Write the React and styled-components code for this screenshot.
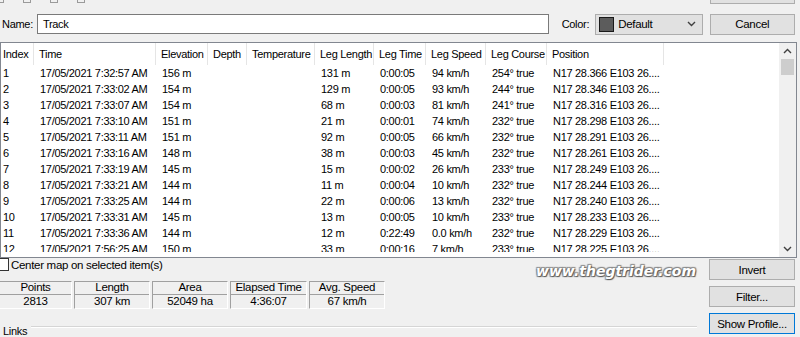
import React from "react";
import styled, { createGlobalStyle } from "styled-components";

const GlobalStyle = createGlobalStyle`
  * {
    margin: 0;
    padding: 0;
    box-sizing: border-box;
  }

  body {
    font-family: 'Liberation Sans', Arial, sans-serif;
    font-size: 11px;
    background-color: #f0f0f0;
    color: #000;
  }
`;

const Window = styled.div`
  width: 800px;
  height: 337px;
  overflow: hidden;
  background: #f0f0f0;
  position: relative;
  letter-spacing: -0.3px;
`;

const TopStrip = styled.div`
  height: 12px;
  display: flex;
  justify-content: space-between;
  align-items: flex-end;
  overflow: hidden;
  padding: 0 5px 0 0;
`;

const ToolIcons = styled.div`
  display: flex;
  gap: 19px;
  align-self: flex-start;
  margin-top: -3px;
  margin-left: -4px;
`;

const ToolIcon = styled.span`
  width: 8px;
  height: 6px;
  border: 1px solid #9a9a9a;
  border-top: none;
`;

const CutButton = styled.div`
  width: 85px;
  height: 22px;
  margin-bottom: 8px;
  background: #e1e1e1;
  border: 1px solid #adadad;
`;

const NameRow = styled.div`
  display: flex;
  align-items: center;
  height: 22px;
  padding: 0 5px 0 2px;
  margin-top: 1px;
`;

const Label = styled.span`
  font-size: 11px;
  margin-right: ${(p) => p.$gap || 5}px;
`;

const TextInput = styled.div`
  width: 515px;
  height: 20px;
  border: 1px solid #7a7a7a;
  background: #fff;
  padding-left: 5px;
  display: flex;
  align-items: center;
  margin-right: 13px;
`;

const Select = styled.div`
  width: 108px;
  height: 21px;
  border: 1px solid #adadad;
  background: #e1e1e1;
  display: flex;
  align-items: center;
  padding: 0 6px 0 3px;
  gap: 4px;
  margin-right: 7px;
`;

const Swatch = styled.span`
  width: 15px;
  height: 15px;
  background: #5c5c5c;
  border: 1px solid #1a1a1a;
`;

const SelectText = styled.span`
  flex: 1;
  font-size: 11.5px;
`;

const Button = styled.div`
  width: 86px;
  height: 21px;
  background: #e1e1e1;
  border: 1px solid ${(p) => (p.$focused ? "#0078d7" : "#adadad")};
  display: flex;
  align-items: center;
  justify-content: center;
  font-size: 11.5px;
`;

const List = styled.div`
  margin-top: 7px;
  width: 797px;
  height: 216px;
  border: 1px solid #828790;
  background: #fff;
  display: flex;
  overflow: hidden;
`;

const Table = styled.div`
  flex: 1;
  height: 209px;
  overflow: hidden;
`;

const COLS = "33px 122px 52px 39px 68px 59px 52px 60px 61px 117px 1fr";

const HeaderRow = styled.div`
  display: grid;
  grid-template-columns: ${COLS};
  height: 22px;
`;

const HeaderCell = styled.div`
  display: flex;
  align-items: center;
  padding-left: ${(p) => (p.$first ? 2 : 5)}px;
  border-right: ${(p) => (p.$last ? "none" : "1px solid #e5e5e5")};
  white-space: nowrap;
`;

const Row = styled.div`
  display: grid;
  grid-template-columns: ${COLS};
  height: 16px;
  align-items: center;
`;

const Cell = styled.div`
  padding-left: ${(p) => (p.$first ? 2 : 6)}px;
  white-space: nowrap;
  overflow: hidden;
`;

const ScrollBar = styled.div`
  width: 17px;
  background: #f0f0f0;
  display: flex;
  flex-direction: column;
  align-items: center;
`;

const Arrow = styled.div`
  height: 16px;
  display: flex;
  align-items: center;
  justify-content: center;
`;

const Thumb = styled.div`
  width: 13px;
  height: 16px;
  background: #cdcdcd;
`;

const Track = styled.div`
  flex: 1;
`;

const Bottom = styled.div`
  display: flex;
  padding-right: 5px;
`;

const LeftPane = styled.div`
  flex: 1;
  display: flex;
  flex-direction: column;
`;

const CheckRow = styled.div`
  display: flex;
  align-items: center;
  height: 13px;
  margin-top: 0;
  margin-left: -4px;
  gap: 2px;
  font-size: 11.5px;
`;

const CheckBox = styled.span`
  width: 13px;
  height: 13px;
  border: 1px solid #333;
  background: #fff;
`;

const Stats = styled.div`
  display: flex;
  gap: 2px;
  margin-top: 10px;
  margin-left: -1px;
`;

const Stat = styled.div`
  width: ${(p) => p.$w}px;
  display: flex;
  flex-direction: column;
  border-left: 1px solid #a0a0a0;
  border-top: 1px solid #a0a0a0;
  border-right: 1px solid #fff;
  border-bottom: 1px solid #fff;
`;

const StatCell = styled.div`
  height: 13px;
  display: flex;
  align-items: center;
  justify-content: center;
  border-bottom: ${(p) => (p.$head ? "1px solid #a0a0a0" : "none")};
  line-height: 1;
  font-size: 11.5px;
`;

const Links = styled.div`
  margin-top: 17px;
  margin-right: 12px;
  display: flex;
  align-items: flex-start;
  gap: 4px;
  padding-left: 3px;
  line-height: 1;
`;

const LinksLine = styled.div`
  flex: 1;
  height: 2px;
  margin-top: 0;
  border-top: 1px solid #d5d5d5;
  border-bottom: 1px solid #fff;
`;

const RightPane = styled.div`
  width: 86px;
  display: flex;
  flex-direction: column;
  gap: 6px;
  padding-top: 1px;
`;

const Watermark = styled.div`
  position: absolute;
  left: 536px;
  top: 263px;
  font-family: 'DejaVu Sans', sans-serif;
  font-weight: bold;
  font-style: italic;
  font-size: 14px;
  letter-spacing: 0;
  color: #fff;
  text-shadow: 1px 1px 1px #555, -1px -1px 1px #888, 1px -1px 1px #888, -1px 1px 1px #888;
`;

const Chevron = ({ up }) => (
  <svg width="9" height="6" viewBox="0 0 9 6">
    <path
      d={up ? "M1 5 L4.5 1.5 L8 5" : "M1 1 L4.5 4.5 L8 1"}
      fill="none"
      stroke="#404040"
      strokeWidth="1.4"
    />
  </svg>
);

const headers = [
  "Index",
  "Time",
  "Elevation",
  "Depth",
  "Temperature",
  "Leg Length",
  "Leg Time",
  "Leg Speed",
  "Leg Course",
  "Position",
  "",
];

const rows = [
  ["1", "17/05/2021 7:32:57 AM", "156 m", "131 m", "0:00:05", "94 km/h", "254° true", "N17 28.366 E103 26...."],
  ["2", "17/05/2021 7:33:02 AM", "154 m", "129 m", "0:00:05", "93 km/h", "244° true", "N17 28.346 E103 26...."],
  ["3", "17/05/2021 7:33:07 AM", "154 m", "68 m", "0:00:03", "81 km/h", "241° true", "N17 28.316 E103 26...."],
  ["4", "17/05/2021 7:33:10 AM", "151 m", "21 m", "0:00:01", "74 km/h", "232° true", "N17 28.298 E103 26...."],
  ["5", "17/05/2021 7:33:11 AM", "151 m", "92 m", "0:00:05", "66 km/h", "232° true", "N17 28.291 E103 26...."],
  ["6", "17/05/2021 7:33:16 AM", "148 m", "38 m", "0:00:03", "45 km/h", "232° true", "N17 28.261 E103 26...."],
  ["7", "17/05/2021 7:33:19 AM", "145 m", "15 m", "0:00:02", "26 km/h", "233° true", "N17 28.249 E103 26...."],
  ["8", "17/05/2021 7:33:21 AM", "144 m", "11 m", "0:00:04", "10 km/h", "232° true", "N17 28.244 E103 26...."],
  ["9", "17/05/2021 7:33:25 AM", "144 m", "22 m", "0:00:06", "13 km/h", "232° true", "N17 28.240 E103 26...."],
  ["10", "17/05/2021 7:33:31 AM", "145 m", "13 m", "0:00:05", "10 km/h", "233° true", "N17 28.233 E103 26...."],
  ["11", "17/05/2021 7:33:36 AM", "144 m", "12 m", "0:22:49", "0.0 km/h", "232° true", "N17 28.229 E103 26...."],
  ["12", "17/05/2021 7:56:25 AM", "150 m", "33 m", "0:00:16", "7 km/h", "233° true", "N17 28.225 E103 26...."],
];

const stats = [
  ["Points", "2813", 73],
  ["Length", "307 km", 76],
  ["Area", "52049 ha", 76],
  ["Elapsed Time", "4:36:07", 77],
  ["Avg. Speed", "67 km/h", 76],
];

export default function App() {
  return (
    <>
      <GlobalStyle />
      <Window>
        <TopStrip>
          <ToolIcons>
            <ToolIcon />
            <ToolIcon />
            <ToolIcon />
            <ToolIcon />
          </ToolIcons>
          <CutButton />
        </TopStrip>
        <NameRow>
          <Label $gap={4}>Name:</Label>
          <TextInput>Track</TextInput>
          <Label $gap={6}>Color:</Label>
          <Select>
            <Swatch />
            <SelectText>Default</SelectText>
            <Chevron />
          </Select>
          <Button>Cancel</Button>
        </NameRow>
        <List>
          <Table>
            <HeaderRow>
              {headers.map((h, i) => (
                <HeaderCell key={i} $first={i === 0} $last={i === headers.length - 1}>
                  {h}
                </HeaderCell>
              ))}
            </HeaderRow>
            {rows.map((r) => (
              <Row key={r[0]}>
                <Cell $first>{r[0]}</Cell>
                <Cell>{r[1]}</Cell>
                <Cell>{r[2]}</Cell>
                <Cell />
                <Cell />
                <Cell>{r[3]}</Cell>
                <Cell>{r[4]}</Cell>
                <Cell>{r[5]}</Cell>
                <Cell>{r[6]}</Cell>
                <Cell>{r[7]}</Cell>
                <Cell />
              </Row>
            ))}
          </Table>
          <ScrollBar>
            <Arrow>
              <Chevron up />
            </Arrow>
            <Thumb />
            <Track />
            <Arrow>
              <Chevron />
            </Arrow>
          </ScrollBar>
        </List>
        <Bottom>
          <LeftPane>
            <CheckRow>
              <CheckBox />
              Center map on selected item(s)
            </CheckRow>
            <Stats>
              {stats.map(([label, value, w]) => (
                <Stat key={label} $w={w}>
                  <StatCell $head>{label}</StatCell>
                  <StatCell>{value}</StatCell>
                </Stat>
              ))}
            </Stats>
            <Links>
              Links
              <LinksLine />
            </Links>
          </LeftPane>
          <RightPane>
            <Button>Invert</Button>
            <Button>Filter...</Button>
            <Button $focused>Show Profile...</Button>
          </RightPane>
        </Bottom>
        <Watermark>www.thegtrider.com</Watermark>
      </Window>
    </>
  );
}
